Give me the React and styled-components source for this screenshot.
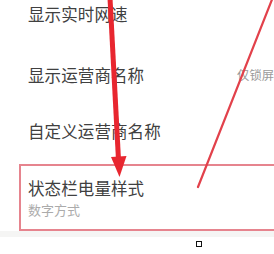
import React from 'react';
import styled, { createGlobalStyle } from 'styled-components';

const GlobalStyle = createGlobalStyle`
  html, body {
    margin: 0;
    padding: 0;
    background: #ffffff;
    overflow: hidden;
  }
  body {
    font-family: "Noto Sans CJK SC", "Noto Sans", sans-serif;
  }
`;

const rows = [
  { title: '显示实时网速', height: 61 },
  { title: '显示运营商名称', height: 61, value: '仅锁屏' },
  { title: '自定义运营商名称', height: 52 },
];

const App = () => {
  return (
    <>
      <GlobalStyle />
      <Page>
        <SettingsList>
          {rows.map((row) => (
            <SettingRow key={row.title} $height={row.height}>
              <RowTitle>{row.title}</RowTitle>
              {row.value && <RowValue>{row.value}</RowValue>}
            </SettingRow>
          ))}
          <Spacer />
          <HighlightRow>
            <RowTitle $lineHeight={24}>状态栏电量样式</RowTitle>
            <RowSubtitle>数字方式</RowSubtitle>
          </HighlightRow>
          <SectionDivider />
        </SettingsList>

        <Annotations width="274" height="254" viewBox="0 0 274 254">
          <line x1="110" y1="-2" x2="118.5" y2="160" stroke="#e8262f" strokeWidth="5" />
          <polygon points="111,157 126.5,156 119.5,177" fill="#e8262f" />
          <line x1="273" y1="-3" x2="198" y2="187" stroke="#e2414b" strokeWidth="2.2" strokeLinecap="round" />
        </Annotations>
        <CursorMark />
      </Page>
    </>
  );
};

// Styled components
const Page = styled.div`
  position: relative;
  width: 274px;
  height: 254px;
  overflow: hidden;
  background: #ffffff;
`;

const SettingsList = styled.div`
  display: flex;
  flex-direction: column;
  margin-top: -17px;
`;

const SettingRow = styled.div`
  height: ${(p) => p.$height}px;
  display: flex;
  align-items: center;
  justify-content: space-between;
  padding-left: 28px;
  white-space: nowrap;
`;

const RowTitle = styled.div`
  font-size: 16.5px;
  line-height: ${(p) => p.$lineHeight || 20}px;
  color: #404040;
  letter-spacing: 0.1px;
`;

const RowValue = styled.div`
  font-size: 12.3px;
  color: #9a9a9a;
  margin-right: 0;
`;

const Spacer = styled.div`
  height: 7px;
`;

const HighlightRow = styled.div`
  margin-left: 19px;
  width: calc(100% + 10px);
  height: 63px;
  border: 2px solid #e6848e;
  border-right: none;
  padding-left: 7px;
  display: flex;
  flex-direction: column;
  justify-content: center;
  white-space: nowrap;
`;

const RowSubtitle = styled.div`
  font-size: 13px;
  line-height: 19px;
  color: #ababab;
`;

const SectionDivider = styled.div`
  height: 6px;
  background: #f5f5f4;
`;

const Annotations = styled.svg`
  position: absolute;
  top: 0;
  left: 0;
  pointer-events: none;
`;

const CursorMark = styled.div`
  position: absolute;
  left: 196px;
  top: 241px;
  width: 4px;
  height: 4px;
  border: 1.5px solid #111;
  background: #fff;
`;

export default App;
